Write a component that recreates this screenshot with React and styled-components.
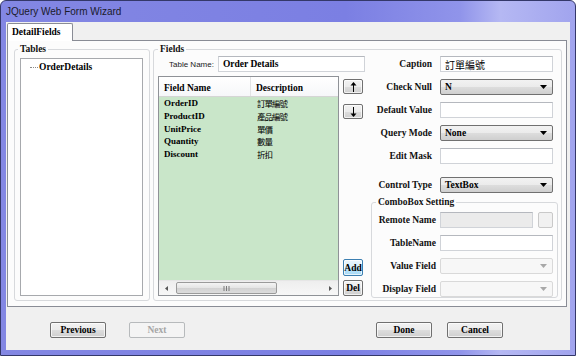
import React from "react"
import styled, { createGlobalStyle } from "styled-components"

const serif = `"Liberation Serif", "Noto Sans CJK TC", serif`
const cjk = `"Noto Sans CJK TC", "Liberation Sans", sans-serif`

const GlobalStyle = createGlobalStyle`
  html, body { margin: 0; padding: 0; }
  body { background: #ffffff; font-family: ${serif}; }
  * { box-sizing: border-box; }
`

const fields = [
  { name: "OrderID", desc: "訂單編號" },
  { name: "ProductID", desc: "產品編號" },
  { name: "UnitPrice", desc: "單價" },
  { name: "Quantity", desc: "數量" },
  { name: "Discount", desc: "折扣" },
]

// window chrome
const Window = styled.div`
  width: 576px;
  height: 356px;
  display: flex;
  flex-direction: column;
  border: 1px solid #34386a;
  border-radius: 6px 6px 0 0;
  background: linear-gradient(90deg, #8387e3 0%, #7b7fe3 60%, #9094ea 80%, #b5b8f3 87%, #a1a4ee 100%);
  padding: 0 5px 5px 5px;
`

const TitleBar = styled.div`
  height: 21px;
  display: flex;
  align-items: center;
  font: 10px "Liberation Sans", sans-serif;
  color: #1a1a2a;
`

const Client = styled.div`
  flex: 1;
  display: flex;
  flex-direction: column;
  background: #f0f0f0;
  padding: 1px 3px 0 1px;
`

const TabStrip = styled.div`
  display: flex;
  height: 17px;
  align-items: flex-start;
`

const Tab = styled.div`
  position: relative;
  z-index: 1;
  width: 66px;
  height: 18px;
  border: 1px solid #898c95;
  border-bottom: none;
  border-radius: 2px 2px 0 0;
  background: #ffffff;
  font: bold 9.5px ${serif};
  padding: 3px 0 0 4px;
`

const TabPage = styled.div`
  height: 267px;
  border: 1px solid #898c95;
  background: #fcfcfc;
  padding: 2px 4px 5px 6px;
  display: flex;
  gap: 3px;
`

const Group = styled.fieldset`
  margin: 0;
  min-width: 0;
  border: 1px solid #d7d9dc;
  border-radius: 3px;
  padding: ${p => p.$pad};
  display: flex;
  flex-direction: ${p => (p.$column ? "column" : "row")};
  flex: ${p => (p.$grow ? 1 : "none")};
  width: ${p => (p.$w ? `${p.$w}px` : "auto")};
  margin-left: ${p => p.$ml || 0}px;
  margin-top: ${p => p.$mt || 0}px;
  flex-shrink: 0;
`

const Legend = styled.legend`
  font: bold 9.5px ${serif};
  line-height: 12px;
  padding: 0 2px;
  margin-left: ${p => p.$ml || 0}px;
  color: #111;
`

// tables list
const ListBox = styled.div`
  flex: 1;
  border: 1px solid #a7a9ad;
  background: #ffffff;
  padding: 2px 0 0 9px;
`

const TreeItem = styled.div`
  display: flex;
  align-items: center;
  height: 12px;
  font: bold 9.5px ${serif};
  &::before {
    content: "";
    width: 8px;
    margin-right: 1px;
    border-top: 1px dotted #8a8a8a;
  }
`

// fields group
const LeftCol = styled.div`
  width: 207px;
  display: flex;
  flex-direction: column;
  padding-top: 1px;
`

const TableNameRow = styled.div`
  display: flex;
  align-items: center;
  height: 16px;
  padding-left: 11px;
  gap: 4px;
`

const SansLabel = styled.span`
  font: 8px "Liberation Sans", sans-serif;
  color: #222;
  white-space: nowrap;
`

const TextBox = styled.div`
  flex: ${p => (p.$w ? "none" : 1)};
  width: ${p => (p.$w ? `${p.$w}px` : "auto")};
  height: 16px;
  border: 1px solid #d0d3d8;
  border-top-color: #b5b8be;
  background: ${p => (p.$disabled ? "#ebebeb" : "#ffffff")};
  display: flex;
  align-items: center;
  padding-left: 4px;
  font: bold 9.5px ${serif};
  white-space: nowrap;
`

const CjkText = styled.span`
  font: ${p => p.$size || 10}px ${cjk};
  letter-spacing: ${p => p.$ls || 0}px;
`

const GridArea = styled.div`
  flex: 1;
  display: flex;
  margin-top: 4px;
  gap: 4px;
`

const Grid = styled.div`
  width: 181px;
  display: flex;
  flex-direction: column;
  border: 1px solid #8f9297;
  background: #c9e6c9;
`

const GridHeader = styled.div`
  height: 20px;
  display: flex;
  background: linear-gradient(#ffffff, #f6f7f9);
  border-bottom: 1px solid #d5d5d5;
`

const HeadCell = styled.div`
  width: ${p => (p.$w ? `${p.$w}px` : "auto")};
  flex: ${p => (p.$w ? "none" : 1)};
  padding: 5px 0 0 ${p => p.$pl}px;
  border-right: ${p => (p.$w ? "1px solid #e2e3e5" : "none")};
  font: bold 9.5px ${serif};
  line-height: 12px;
`

const GridBody = styled.div`
  flex: 1;
`

const GridRow = styled.div`
  display: flex;
  height: 12.7px;
  align-items: center;
`

const Cell = styled.div`
  width: ${p => (p.$w ? `${p.$w}px` : "auto")};
  flex: ${p => (p.$w ? "none" : 1)};
  padding-left: ${p => p.$pl}px;
  font: bold 9px ${serif};
  white-space: nowrap;
`

const HScroll = styled.div`
  height: 15px;
  display: flex;
  align-items: center;
  background: linear-gradient(#eeeeee, #f7f7f7);
  border-top: 1px solid #e6e6e6;
  padding: 0 6px;
`

const Thumb = styled.div`
  width: 101px;
  height: 12px;
  margin-left: 8px;
  border: 1px solid #9a9a9a;
  border-radius: 2px;
  background: linear-gradient(#f4f4f4, #e4e4e4 50%, #d2d2d2 51%, #dcdcdc);
  display: flex;
  align-items: center;
  justify-content: center;
`

const ButtonCol = styled.div`
  width: 20px;
  display: flex;
  flex-direction: column;
  padding-top: 3px;
`

const Button = styled.button`
  width: ${p => p.$w}px;
  height: ${p => p.$h || 16}px;
  margin: ${p => p.$m || 0};
  padding: 0;
  display: flex;
  align-items: center;
  justify-content: center;
  border: 1px solid ${p => (p.$default ? "#3c7fb1" : p.disabled ? "#b7babc" : "#707070")};
  border-radius: 2px;
  background: ${p =>
    p.disabled
      ? "#f4f4f4"
      : p.$default
      ? "linear-gradient(#eaf6fd, #d9f0fc 50%, #bee6fd 51%, #a7d9f5)"
      : "linear-gradient(#f2f2f2, #ebebeb 50%, #dddddd 51%, #cfcfcf)"};
  box-shadow: inset 0 0 0 1px ${p => (p.disabled ? "transparent" : "rgba(255,255,255,0.7)")};
  color: ${p => (p.disabled ? "#a6a6a6" : "#000")};
  font: bold 9.5px ${serif};
`

// right column form
const RightCol = styled.div`
  flex: 1;
  display: flex;
  flex-direction: column;
  gap: 7px;
  padding-top: 1px;
`

const FormRow = styled.div`
  display: flex;
  align-items: center;
  height: 16px;
  flex-shrink: 0;
  gap: ${p => p.$gap || 8}px;
  padding-right: ${p => p.$pr || 0}px;
  margin-top: ${p => p.$mt || 0}px;
`

const Label = styled.span`
  width: ${p => p.$w}px;
  text-align: right;
  font: bold 9.5px ${serif};
  color: #111;
  white-space: nowrap;
`

const Select = styled.div`
  flex: 1;
  height: 16px;
  display: flex;
  align-items: center;
  justify-content: space-between;
  padding: 0 5px 0 4px;
  border: 1px solid ${p => (p.$disabled ? "#d9d9d9" : "#707070")};
  border-radius: 2px;
  background: ${p =>
    p.$disabled ? "#f7f7f7" : "linear-gradient(#f2f2f2, #ebebeb 50%, #dddddd 51%, #cfcfcf)"};
  font: bold 9.5px ${serif};
`

const ComboRows = styled.div`
  display: flex;
  flex-direction: column;
  gap: 7px;
`

const SmallButton = styled.div`
  width: 15px;
  height: 16px;
  border: 1px solid #c9c9c9;
  border-radius: 2px;
  background: #f1f1f1;
`

const ButtonBar = styled.div`
  flex: 1;
  display: flex;
  align-items: flex-start;
  padding: 15px 64px 0 43px;
`

const Arrow = ({ up }) => (
  <svg width="7" height="10" viewBox="0 0 7 10">
    <line x1="3.5" y1={up ? 2 : 0} x2="3.5" y2={up ? 10 : 8} stroke="#000" strokeWidth="1" />
    <polygon points={up ? "0.5,3.5 3.5,0 6.5,3.5" : "0.5,6.5 3.5,10 6.5,6.5"} fill="#000" />
  </svg>
)

const DropArrow = ({ disabled }) => (
  <svg width="7" height="4" viewBox="0 0 7 4">
    <polygon points="0,0 7,0 3.5,4" fill={disabled ? "#a8a8a8" : "#000"} />
  </svg>
)

const ScrollArrow = ({ right }) => (
  <svg width="3" height="5" viewBox="0 0 3 5">
    <polygon points={right ? "0,0 3,2.5 0,5" : "3,0 0,2.5 3,5"} fill="#555" />
  </svg>
)

const Grip = () => (
  <svg width="7" height="5" viewBox="0 0 7 5">
    <line x1="1" y1="0" x2="1" y2="5" stroke="#7a7a7a" />
    <line x1="3.5" y1="0" x2="3.5" y2="5" stroke="#7a7a7a" />
    <line x1="6" y1="0" x2="6" y2="5" stroke="#7a7a7a" />
  </svg>
)

export default function App() {
  return (
    <>
      <GlobalStyle />
      <Window>
        <TitleBar>JQuery Web Form Wizard</TitleBar>
        <Client>
          <TabStrip>
            <Tab>DetailFields</Tab>
          </TabStrip>
          <TabPage>
            <Group $w={136} $pad="3px 6px 4px 5px" $column>
              <Legend $ml={-2}>Tables</Legend>
              <ListBox>
                <TreeItem>OrderDetails</TreeItem>
              </ListBox>
            </Group>

            <Group $grow $pad="0 3px 4px 4px">
              <Legend>Fields</Legend>
              <LeftCol>
                <TableNameRow>
                  <SansLabel>Table Name:</SansLabel>
                  <TextBox>Order Details</TextBox>
                </TableNameRow>
                <GridArea>
                  <Grid>
                    <GridHeader>
                      <HeadCell $w={92} $pl={5}>Field Name</HeadCell>
                      <HeadCell $pl={5}>Description</HeadCell>
                    </GridHeader>
                    <GridBody>
                      {fields.map(f => (
                        <GridRow key={f.name}>
                          <Cell $w={92} $pl={5}>{f.name}</Cell>
                          <Cell $pl={6}>
                            <CjkText $size={8.5} $ls={-1}>{f.desc}</CjkText>
                          </Cell>
                        </GridRow>
                      ))}
                    </GridBody>
                    <HScroll>
                      <ScrollArrow />
                      <Thumb>
                        <Grip />
                      </Thumb>
                      <div style={{ flex: 1 }} />
                      <ScrollArrow right />
                    </HScroll>
                  </Grid>
                  <ButtonCol>
                    <Button $w={20} $h={15}>
                      <Arrow up />
                    </Button>
                    <Button $w={20} $h={15} $m="10px 0 0 0">
                      <Arrow />
                    </Button>
                    <div style={{ flex: 1 }} />
                    <Button $w={20} $h={17} $default>Add</Button>
                    <Button $w={20} $m="4px 0 0 0">Del</Button>
                  </ButtonCol>
                </GridArea>
              </LeftCol>

              <RightCol>
                <FormRow $pr={5}>
                  <Label $w={67}>Caption</Label>
                  <TextBox>
                    <CjkText>訂單編號</CjkText>
                  </TextBox>
                </FormRow>
                <FormRow $pr={5}>
                  <Label $w={67}>Check Null</Label>
                  <Select>
                    N<DropArrow />
                  </Select>
                </FormRow>
                <FormRow $pr={5}>
                  <Label $w={67}>Default Value</Label>
                  <TextBox />
                </FormRow>
                <FormRow $pr={5}>
                  <Label $w={67}>Query Mode</Label>
                  <Select>
                    None<DropArrow />
                  </Select>
                </FormRow>
                <FormRow $pr={5}>
                  <Label $w={67}>Edit Mask</Label>
                  <TextBox />
                </FormRow>
                <FormRow $pr={5} $mt={6}>
                  <Label $w={67}>Control Type</Label>
                  <Select>
                    TextBox<DropArrow />
                  </Select>
                </FormRow>
                <Group $ml={6} $mt={-4} $pad="4px 4px 0 4px" $column>
                  <Legend>ComboBox Setting</Legend>
                  <ComboRows>
                    <FormRow $gap={4}>
                      <Label $w={60}>Remote Name</Label>
                      <TextBox $disabled />
                      <SmallButton style={{ marginLeft: 1 }} />
                    </FormRow>
                    <FormRow $gap={4}>
                      <Label $w={60}>TableName</Label>
                      <TextBox />
                    </FormRow>
                    <FormRow $gap={4}>
                      <Label $w={60}>Value Field</Label>
                      <Select $disabled>
                        <span />
                        <DropArrow disabled />
                      </Select>
                    </FormRow>
                    <FormRow $gap={4}>
                      <Label $w={60}>Display Field</Label>
                      <Select $disabled>
                        <span />
                        <DropArrow disabled />
                      </Select>
                    </FormRow>
                  </ComboRows>
                </Group>
              </RightCol>
            </Group>
          </TabPage>
          <ButtonBar>
            <Button $w={56}>Previous</Button>
            <Button $w={56} $m="0 0 0 23px" disabled>Next</Button>
            <Button $w={56} $m="0 0 0 auto">Done</Button>
            <Button $w={56} $m="0 0 0 15px">Cancel</Button>
          </ButtonBar>
        </Client>
      </Window>
    </>
  )
}
